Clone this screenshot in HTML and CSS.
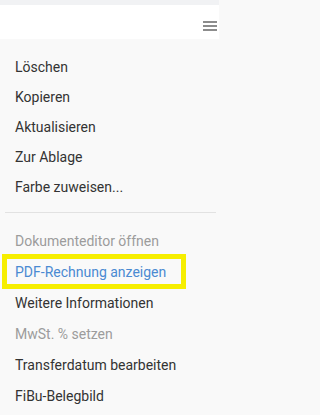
FILE: index.html
```html
<!DOCTYPE html>
<html lang="de">
<head>
<meta charset="utf-8">
<title>Menü</title>
<link rel="stylesheet" href="styles.css">
</head>
<body>
<div class="topstrip"></div>
<header class="header">
  <button class="burger" aria-label="Menü">
    <span></span><span></span><span></span>
  </button>
</header>
<nav class="menu">
  <ul class="group">
    <li class="item">Löschen</li>
    <li class="item">Kopieren</li>
    <li class="item">Aktualisieren</li>
    <li class="item">Zur Ablage</li>
    <li class="item">Farbe zuweisen...</li>
  </ul>
  <hr class="divider">
  <ul class="group group-wide">
    <li class="item disabled">Dokumenteditor öffnen</li>
    <li class="item link highlighted">PDF-Rechnung anzeigen</li>
    <li class="item">Weitere Informationen</li>
    <li class="item disabled">MwSt. % setzen</li>
    <li class="item">Transferdatum bearbeiten</li>
    <li class="item">FiBu-Belegbild</li>
  </ul>
</nav>
</body>
</html>
```

FILE: styles.css
```css
html, body {
  margin: 0;
  padding: 0;
}
body {
  width: 219px;
  min-height: 415px;
  background: #f9f9f9;
  font-family: Roboto, "Liberation Sans", sans-serif;
  font-size: 14px;
  color: #333333;
  overflow: hidden;
}
.topstrip {
  height: 5px;
  background: #f1f2f4;
}
.header {
  height: 34px;
  background: #ffffff;
  display: flex;
  justify-content: flex-end;
  align-items: flex-start;
}
.burger {
  margin: 16px 2px 0 0;
  padding: 0;
  border: 0;
  background: transparent;
  width: 14px;
  display: flex;
  flex-direction: column;
  gap: 2px;
}
.burger span {
  display: block;
  height: 2px;
  width: 14px;
  background: #8c8c8c;
}
.menu {
  padding-top: 13px;
}
.group {
  list-style: none;
  margin: 0;
  padding: 0;
}
.item {
  height: 30px;
  line-height: 30px;
  padding-left: 15px;
  white-space: nowrap;
  position: relative;
}
.group-wide .item {
  height: 31px;
  line-height: 31px;
}
.item.disabled {
  color: #9c9c9c;
}
.item.link {
  color: #4a8ad2;
}
.item.highlighted::after {
  content: "";
  position: absolute;
  top: -3px;
  bottom: -1px;
  left: 2px;
  width: 184px;
  box-sizing: border-box;
  border: 5px solid #f6ee00;
}
.divider {
  border: 0;
  height: 1px;
  background: #e2e2e2;
  margin: 10px 3px 13px 5px;
}
```
